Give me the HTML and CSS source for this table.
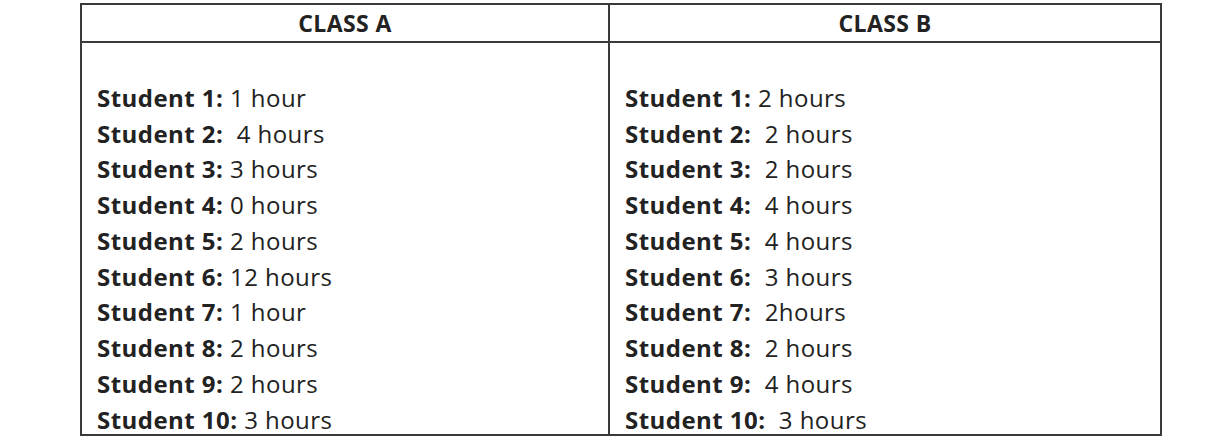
FILE: index.html
```html
<!DOCTYPE html>
<html>
<head>
<meta charset="utf-8">
<link rel="stylesheet" href="styles.css">
</head>
<body>
<table class="hours">
  <colgroup>
    <col class="col-a">
    <col class="col-b">
  </colgroup>
  <thead>
    <tr><th>CLASS A</th><th>CLASS B</th></tr>
  </thead>
  <tbody>
    <tr>
      <td>
        <div class="cell">
          <div class="line">&nbsp;</div>
          <div class="line"><b>Student 1:</b> 1 hour</div>
          <div class="line"><b>Student 2:</b>&nbsp; 4 hours</div>
          <div class="line"><b>Student 3:</b> 3 hours</div>
          <div class="line"><b>Student 4:</b> 0 hours</div>
          <div class="line"><b>Student 5:</b> 2 hours</div>
          <div class="line"><b>Student 6:</b> 12 hours</div>
          <div class="line"><b>Student 7:</b> 1 hour</div>
          <div class="line"><b>Student 8:</b> 2 hours</div>
          <div class="line"><b>Student 9:</b> 2 hours</div>
          <div class="line"><b>Student 10:</b> 3 hours</div>
        </div>
      </td>
      <td>
        <div class="cell">
          <div class="line">&nbsp;</div>
          <div class="line"><b>Student 1:</b> 2 hours</div>
          <div class="line"><b>Student 2:</b>&nbsp; 2 hours</div>
          <div class="line"><b>Student 3:</b>&nbsp; 2 hours</div>
          <div class="line"><b>Student 4:</b>&nbsp; 4 hours</div>
          <div class="line"><b>Student 5:</b>&nbsp; 4 hours</div>
          <div class="line"><b>Student 6:</b>&nbsp; 3 hours</div>
          <div class="line"><b>Student 7:</b>&nbsp; 2hours</div>
          <div class="line"><b>Student 8:</b>&nbsp; 2 hours</div>
          <div class="line"><b>Student 9:</b>&nbsp; 4 hours</div>
          <div class="line"><b>Student 10:</b>&nbsp; 3 hours</div>
        </div>
      </td>
    </tr>
  </tbody>
</table>
</body>
</html>
```
FILE: styles.css
```css
html, body {
  margin: 0;
  padding: 0;
  background: #fff;
}
body {
  padding: 3px 0 0 80px;
  font-family: "Open Sans", Lato, sans-serif;
  color: #222;
}
.hours {
  border-collapse: collapse;
  width: 1080px;
  table-layout: fixed;
}
.col-a { width: 528px; }
.col-b { width: 552px; }
.hours th, .hours td {
  border: 2px solid #3a3a3a;
  vertical-align: top;
  padding: 0;
}
.hours th {
  height: 36px;
  font-size: 23px;
  font-weight: 700;
  text-align: center;
  line-height: 36px;
  letter-spacing: 0.4px;
}
.cell {
  height: 391px;
  overflow: hidden;
  padding: 1px 0 0 15px;
  box-sizing: border-box;
  font-size: 24px;
  letter-spacing: 0.45px;
}
.line {
  line-height: 35.75px;
  white-space: nowrap;
}
.line b {
  font-weight: 700;
}
```
